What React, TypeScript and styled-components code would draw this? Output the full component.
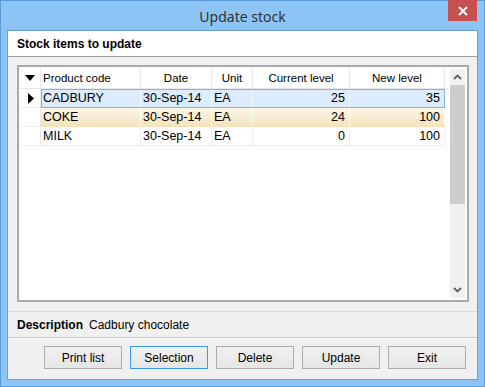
import React, { FC } from 'react'
import styled, { createGlobalStyle, css } from 'styled-components'

const Global = createGlobalStyle`
  html, body { margin: 0; padding: 0; background: #8cc4f5; }
  * { box-sizing: border-box; }
`

type TItem = {
  code: string,
  date: string,
  unit: string,
  current: number,
  next: number,
}

const items: TItem[] = [
  { code: 'CADBURY', date: '30-Sep-14', unit: 'EA', current: 25, next: 35 },
  { code: 'COKE', date: '30-Sep-14', unit: 'EA', current: 24, next: 100 },
  { code: 'MILK', date: '30-Sep-14', unit: 'EA', current: 0, next: 100 },
]

const cols = [100, 71, 41, 97, 95]
const buttons = ['Print list', 'Selection', 'Delete', 'Update', 'Exit']

type TRowKind = 'selected' | 'hot' | 'plain'

const DownTri = () => (
  <svg width="10" height="6" viewBox="0 0 10 6"><path d="M0 0h10L5 6z" fill="#000" /></svg>
)
const RightTri = () => (
  <svg width="6" height="11" viewBox="0 0 6 11"><path d="M0 0l6 5.5L0 11z" fill="#000" /></svg>
)
const Chevron: FC<{up?: boolean}> = ({up}) => (
  <svg width="9" height="6" viewBox="0 0 9 6">
    <path d={up ? 'M1 5l3.5-3.5L8 5' : 'M1 1l3.5 3.5L8 1'} stroke="#606060" strokeWidth="1.8" fill="none" />
  </svg>
)

const GridRow: FC<{item: TItem, kind: TRowKind}> = ({item, kind}) => {
  const vals = [item.code, item.date, item.unit, String(item.current), String(item.next)]
  return (
    <S.Row>
      <S.Indicator>{kind === 'selected' && <RightTri />}</S.Indicator>
      <S.Cells $kind={kind}>
        {vals.map((v, i) => (
          <S.Cell key={i} $w={cols[i]} $right={i > 2} $kind={kind}>{v}</S.Cell>
        ))}
      </S.Cells>
    </S.Row>
  )
}

export default function App() {
  return (
    <>
      <Global />
      <S.Window>
        <S.TitleBar>
          <S.Title>Update stock</S.Title>
          <S.Close>
            <svg width="10" height="10" viewBox="0 0 10 10">
              <path d="M1 1l8 8M9 1l-8 8" stroke="#fff" strokeWidth="2" />
            </svg>
          </S.Close>
        </S.TitleBar>
        <S.Client>
          <S.Heading>Stock items to update</S.Heading>
          <S.GridPanel>
            <S.Grid>
              <S.Table>
                <S.HeadRow>
                  <S.HeadIndicator><DownTri /></S.HeadIndicator>
                  {['Product code', 'Date', 'Unit', 'Current level', 'New level'].map((h, i) => (
                    <S.HeadCell key={h} $w={cols[i]} $left={i === 0}>{h}</S.HeadCell>
                  ))}
                </S.HeadRow>
                {items.map((it, i) => (
                  <GridRow key={it.code} item={it} kind={i === 0 ? 'selected' : i === 1 ? 'hot' : 'plain'} />
                ))}
              </S.Table>
              <S.ScrollBar>
                <S.ScrollBtn><Chevron up /></S.ScrollBtn>
                <S.Thumb />
                <S.Track />
                <S.ScrollBtn><Chevron /></S.ScrollBtn>
              </S.ScrollBar>
            </S.Grid>
          </S.GridPanel>
          <S.DescPanel>
            <S.DescLabel>Description</S.DescLabel>
            <span>Cadbury chocolate</span>
          </S.DescPanel>
          <S.ButtonBar>
            {buttons.map(b => (
              <S.Button key={b} $focused={b === 'Selection'}>{b}</S.Button>
            ))}
          </S.ButtonBar>
        </S.Client>
      </S.Window>
    </>
  )
}

const S = {
  Window: styled.div`
    width: 485px;
    height: 387px;
    border: 1px solid #5d9bd8;
    background: #8cc4f5;
    padding: 0 6px 6px 6px;
    display: flex;
    flex-direction: column;
    font-family: "Liberation Sans", Arial, sans-serif;
    font-size: 11px;
    color: #000;
  `,
    TitleBar: styled.div`
      height: 29px;
      position: relative;
      display: flex;
      justify-content: center;
      align-items: center;
    `,
      Title: styled.div`
        font-family: "Noto Sans", sans-serif;
        font-size: 14px;
        color: #333;
        padding-top: 1px;
      `,
      Close: styled.div`
        position: absolute;
        top: -1px;
        right: 1px;
        width: 29px;
        height: 21px;
        background: #c75050;
        display: flex;
        align-items: center;
        justify-content: center;
      `,
    Client: styled.div`
      flex: 1;
      border: 1px solid #6f9fcf;
      background: #f0f0f0;
      display: flex;
      flex-direction: column;
      overflow: hidden;
    `,
      Heading: styled.div`
        height: 26px;
        background: #fff;
        border-bottom: 1px solid #a0a0a0;
        padding: 0 0 0 9px;
        display: flex;
        align-items: center;
        font-weight: bold;
        font-size: 12px;
      `,
      GridPanel: styled.div`
        height: 255px;
        padding: 8px 8px 10px 9px;
        border-bottom: 1px solid #dadada;
      `,
        Grid: styled.div`
          height: 237px;
          border: 2px solid #a9a9a9;
          background: #fff;
          display: flex;
          padding-right: 2px;
        `,
          Table: styled.div`
            width: 430px;
            display: flex;
            flex-direction: column;
          `,
            HeadRow: styled.div`
              display: flex;
              height: 22px;
              border-bottom: 1px solid #e8e8e8;
            `,
              HeadIndicator: styled.div`
                width: 22px;
                border-right: 1px solid #e8e8e8;
                display: flex;
                align-items: center;
                justify-content: center;
              `,
              HeadCell: styled.div<{$w: number, $left?: boolean}>`
                width: ${p => p.$w}px;
                border-right: 1px solid #e8e8e8;
                display: flex;
                align-items: center;
                justify-content: ${p => p.$left ? 'flex-start' : 'center'};
                padding-left: ${p => p.$left ? '2px' : '0'};
                font-size: 11.5px;
                color: #000;
              `,
            Row: styled.div`
              display: flex;
              height: 19px;
            `,
              Indicator: styled.div`
                width: 22px;
                border-right: 1px solid #e8e8e8;
                border-bottom: 1px solid #eeeeee;
                display: flex;
                align-items: center;
                justify-content: center;
                padding-left: 2px;
              `,
              Cells: styled.div<{$kind: TRowKind}>`
                display: flex;
                ${p => p.$kind === 'selected' && css`
                  outline: 1px solid #7fb4ea;
                  outline-offset: -1px;
                  background: #dcecfc;
                `}
                ${p => p.$kind === 'hot' && css`
                  background: linear-gradient(#fdf7e8, #f3e1b9);
                `}
              `,
                Cell: styled.div<{$w: number, $right: boolean, $kind: TRowKind}>`
                  width: ${p => p.$w}px;
                  border-right: 1px solid ${p => p.$kind === 'plain' ? '#eeeeee' : 'rgba(255,255,255,0.7)'};
                  border-bottom: 1px solid ${p => p.$kind === 'plain' ? '#eeeeee' : 'transparent'};
                  display: flex;
                  align-items: center;
                  justify-content: ${p => p.$right ? 'flex-end' : 'flex-start'};
                  padding: ${p => p.$right ? '0 4px 0 0' : '0 0 0 2px'};
                  font-size: 12.5px;
                  white-space: nowrap;
                `,
          ScrollBar: styled.div`
            width: 15px;
            margin: 2px 0 2px auto;
            background: #f0f0f0;
            display: flex;
            flex-direction: column;
          `,
            ScrollBtn: styled.div`
              height: 16px;
              display: flex;
              align-items: center;
              justify-content: center;
            `,
            Thumb: styled.div`
              height: 119px;
              background: #cdcdcd;
            `,
            Track: styled.div`
              flex: 1;
            `,
      DescPanel: styled.div`
        height: 26px;
        padding-left: 9px;
        display: flex;
        align-items: center;
        gap: 6px;
        font-size: 12px;
        border-bottom: 1px solid #c8c8c8;
      `,
        DescLabel: styled.span`
          font-weight: bold;
        `,
      ButtonBar: styled.div`
        flex: 1;
        display: flex;
        gap: 8px;
        padding: 7px 0 0 36px;
        border-top: 1px solid #fff;
      `,
        Button: styled.div<{$focused?: boolean}>`
          width: 78px;
          height: 23px;
          border: 1px solid ${p => p.$focused ? '#3c9af0' : '#adadad'};
          background: linear-gradient(#f0f0f0, #e6e6e6);
          display: flex;
          align-items: center;
          justify-content: center;
          font-size: 12px;
        `,
}
